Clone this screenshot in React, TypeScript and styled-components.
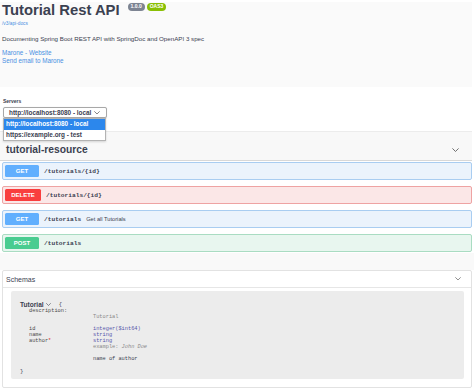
import React, {FC} from 'react'
import styled, {createGlobalStyle} from 'styled-components'

const GlobalStyle = createGlobalStyle`
  html, body {
    margin: 0;
    padding: 0;
    background: #fff;
  }
  body {
    font-family: "Liberation Sans", Arial, sans-serif;
    color: #3b4151;
  }
`;

type Method = 'get' | 'delete' | 'post';

const methodColors: Record<Method, {main: string; bg: string; border: string}> = {
    get: {main: '#61affe', bg: '#ebf3fc', border: '#a9cdf1'},
    delete: {main: '#f93e3e', bg: '#fbe7e7', border: '#eea3a3'},
    post: {main: '#49cc90', bg: '#e8f6ef', border: '#a9dcc2'},
};

const operations: {method: Method; path: string; summary?: string}[] = [
    {method: 'get', path: '/tutorials/{id}'},
    {method: 'delete', path: '/tutorials/{id}'},
    {method: 'get', path: '/tutorials', summary: 'Get all Tutorials'},
    {method: 'post', path: '/tutorials'},
];

const Chevron: FC<{size?: number; color?: string}> = ({size = 7, color = '#3b4151'}) => (
    <svg width={size} height={size * 0.6} viewBox="0 0 10 6" fill="none">
        <path d="M1 1l4 4 4-4" stroke={color} strokeWidth="1.2" strokeLinecap="round" strokeLinejoin="round"/>
    </svg>
);

const App: FC = () => {
    return (
        <>
            <GlobalStyle/>
            <Page>
                <Info>
                    <TitleRow>
                        <Title>Tutorial Rest API</Title>
                        <Badge color="#7d8492">1.0.0</Badge>
                        <Badge color="#89bf04">OAS3</Badge>
                    </TitleRow>
                    <SpecLink>/v3/api-docs</SpecLink>
                    <Description>Documenting Spring Boot REST API with SpringDoc and OpenAPI 3 spec</Description>
                    <Links>
                        <InfoLink>Marone - Website</InfoLink>
                        <InfoLink>Send email to Marone</InfoLink>
                    </Links>
                </Info>

                <Servers>
                    <ServersLabel>Servers</ServersLabel>
                    <SelectWrap>
                        <Select>
                            <span>http://localhost:8080 - local</span>
                            <Chevron size={6} color="#555"/>
                        </Select>
                        <Dropdown>
                            <Option selected>http://localhost:8080 - local</Option>
                            <Option>https://example.org - test</Option>
                        </Dropdown>
                    </SelectWrap>
                </Servers>

                <TagHeader>
                    <TagName>tutorial-resource</TagName>
                    <Chevron size={7} color="#555"/>
                </TagHeader>

                <OpList>
                    {operations.map((op, i) => (
                        <OpBlock key={i} method={op.method}>
                            <MethodBadge method={op.method}>{op.method.toUpperCase()}</MethodBadge>
                            <OpPath>{op.path}</OpPath>
                            {op.summary && <OpSummary>{op.summary}</OpSummary>}
                        </OpBlock>
                    ))}
                </OpList>

                <Gap/>

                <SchemasBox>
                    <SchemasHeader>
                        <span>Schemas</span>
                        <Chevron size={6} color="#666"/>
                    </SchemasHeader>
                    <ModelBox>
                        <ModelTitle>
                            <span>Tutorial</span>
                            <Chevron size={5} color="#3b4151"/>
                            <Brace>{'{'}</Brace>
                        </ModelTitle>
                        <Props>
                            <PropName>description:</PropName>
                            <span/>
                            <span/>
                            <Muted>Tutorial</Muted>
                            <RowGap/>
                            <PropName>id</PropName>
                            <Type>integer($int64)</Type>
                            <PropName>name</PropName>
                            <Type>string</Type>
                            <PropName>author<Required>*</Required></PropName>
                            <Type>string</Type>
                            <span/>
                            <Muted>example: <i>John Doe</i></Muted>
                            <RowGap/>
                            <span/>
                            <Dark>name of author</Dark>
                        </Props>
                        <ClosingBrace>{'}'}</ClosingBrace>
                    </ModelBox>
                </SchemasBox>
            </Page>
        </>
    )
};

export default App;


const Page = styled.div`
  width: 474px;
  height: 392px;
  overflow: hidden;
  padding-top: 2px;
  box-sizing: border-box;
`;

const Info = styled.section`
  height: 85px;
  width: 472px;
  background: #fafafa;
  padding-left: 2px;
  box-sizing: border-box;
`;

const TitleRow = styled.div`
  display: flex;
  align-items: flex-start;
  height: 17px;
`;

const Title = styled.h2`
  margin: 0;
  font-size: 14.8px;
  line-height: 17px;
  font-weight: 700;
  color: #3b4151;
`;

const Badge = styled.span<{color: string}>`
  margin-left: ${p => (p.color === '#7d8492' ? '8px' : '2px')};
  margin-top: 1px;
  height: 7.5px;
  padding: 0 3px;
  border-radius: 4px;
  background: ${p => p.color};
  color: #fff;
  font-size: 5px;
  font-weight: 700;
  line-height: 7.5px;
`;

const SpecLink = styled.div`
  margin-top: 2px;
  font-size: 4.8px;
  line-height: 6px;
  color: #4990e2;
`;

const Description = styled.p`
  margin: 8px 0 0;
  font-size: 6.2px;
  line-height: 8px;
  color: #3b4151;
`;

const Links = styled.div`
  margin-top: 6px;
  display: flex;
  flex-direction: column;
`;

const InfoLink = styled.span`
  font-size: 6.3px;
  line-height: 8px;
  color: #4990e2;
`;

const Servers = styled.section`
  height: 44px;
  padding: 11px 0 0 3px;
  box-sizing: border-box;
`;

const ServersLabel = styled.div`
  font-size: 5px;
  line-height: 6px;
  font-weight: 700;
  color: #3b4151;
`;

const SelectWrap = styled.div`
  position: relative;
  margin-top: 3px;
  width: 104px;
  z-index: 2;
`;

const Select = styled.div`
  height: 11px;
  display: flex;
  align-items: center;
  justify-content: space-between;
  padding: 0 6px 0 5px;
  border: 1px solid #a8a8a8;
  border-radius: 2px;
  box-sizing: border-box;
  background: #fff;
  font-size: 6.4px;
  font-weight: 700;
  color: #3b4151;
  box-shadow: 0 0.5px 1px rgba(0, 0, 0, 0.15);
`;

const Dropdown = styled.div`
  position: absolute;
  top: 11px;
  left: 0;
  width: 103px;
  background: #fff;
  border: 1px solid #b3b3b3;
  box-sizing: border-box;
  box-shadow: 0 1px 2px rgba(0, 0, 0, 0.15);
`;

const Option = styled.div<{selected?: boolean}>`
  height: 10.5px;
  line-height: 10.5px;
  padding-left: 2px;
  font-size: 6.4px;
  font-weight: 700;
  background: ${p => (p.selected ? '#2c87ec' : '#fff')};
  color: ${p => (p.selected ? '#fff' : '#3b4151')};
`;

const TagHeader = styled.div`
  width: 472px;
  height: 30px;
  display: flex;
  align-items: center;
  justify-content: space-between;
  padding: 8px 13px 0 6px;
  box-sizing: border-box;
  background: #f8f8f8;
  border-top: 1px solid #ececec;
  border-bottom: 1px solid #d8d8d8;
`;

const TagName = styled.h3`
  margin: 0;
  font-size: 10.3px;
  line-height: 12px;
  font-weight: 700;
  color: #3b4151;
`;

const OpList = styled.div`
  padding: 1px 2px 0;
  display: flex;
  flex-direction: column;
  gap: 6px;
`;

const OpBlock = styled.div<{method: Method}>`
  height: 18px;
  display: flex;
  align-items: center;
  padding-left: 2px;
  box-sizing: border-box;
  background: ${p => methodColors[p.method].bg};
  border: 1px solid ${p => methodColors[p.method].border};
  border-radius: 2px;
  width: 470px;
`;

const MethodBadge = styled.span<{method: Method}>`
  width: ${p => (p.method === 'delete' ? '36px' : '34px')};
  height: 12px;
  line-height: 12px;
  text-align: center;
  border-radius: 1.5px;
  background: ${p => methodColors[p.method].main};
  color: #fff;
  font-size: 6px;
  font-weight: 700;
`;

const OpPath = styled.span`
  margin-left: 5px;
  font-family: "Liberation Mono", "Courier New", monospace;
  font-size: 6.2px;
  font-weight: 700;
  color: #3b4151;
`;

const OpSummary = styled.span`
  margin-left: 5px;
  font-size: 5.7px;
  color: #3b4151;
`;

const Gap = styled.div`
  margin-top: 1px;
  height: 17px;
  background: #f9f9f9;
`;

const SchemasBox = styled.section`
  margin-left: 2px;
  width: 470px;
  height: 118px;
  border: 1px solid #e2e2e2;
  border-radius: 2px;
  box-sizing: border-box;
  background: #fff;
`;

const SchemasHeader = styled.div`
  height: 17px;
  display: flex;
  align-items: center;
  justify-content: space-between;
  padding: 0 10px 0 3px;
  box-sizing: border-box;
  border-bottom: 1px solid #e6e6e6;
  font-size: 7px;
  color: #3b4151;
`;

const ModelBox = styled.div`
  margin: 3px 0 0 8px;
  width: 453px;
  height: 88px;
  background: #ececec;
  border-radius: 2px;
  padding: 9px 9px 0;
  box-sizing: border-box;
`;

const ModelTitle = styled.div`
  display: flex;
  align-items: center;
  gap: 2px;
  height: 8px;
  font-size: 6.6px;
  font-weight: 700;
  color: #3b4151;
`;

const Brace = styled.span`
  margin-left: 6px;
  font-family: "Liberation Mono", monospace;
  font-size: 5.5px;
  font-weight: 400;
`;

const Props = styled.div`
  display: grid;
  grid-template-columns: 64px 1fr;
  grid-auto-rows: 6px;
  padding-left: 9px;
  font-family: "Liberation Mono", "Courier New", monospace;
  font-size: 5.3px;
  line-height: 6px;
`;

const PropName = styled.span`
  color: #4a4a4a;
`;

const Required = styled.span`
  color: #e0201c;
`;

const Type = styled.span`
  color: #55a;
`;

const Muted = styled.span`
  color: #888;
`;

const Dark = styled.span`
  color: #3b4151;
`;

const RowGap = styled.div`
  grid-column: 1 / -1;
  height: 5px;
`;

const ClosingBrace = styled.div`
  margin-top: 7px;
  font-family: "Liberation Mono", monospace;
  font-size: 5.5px;
  line-height: 6px;
  color: #3b4151;
`;
